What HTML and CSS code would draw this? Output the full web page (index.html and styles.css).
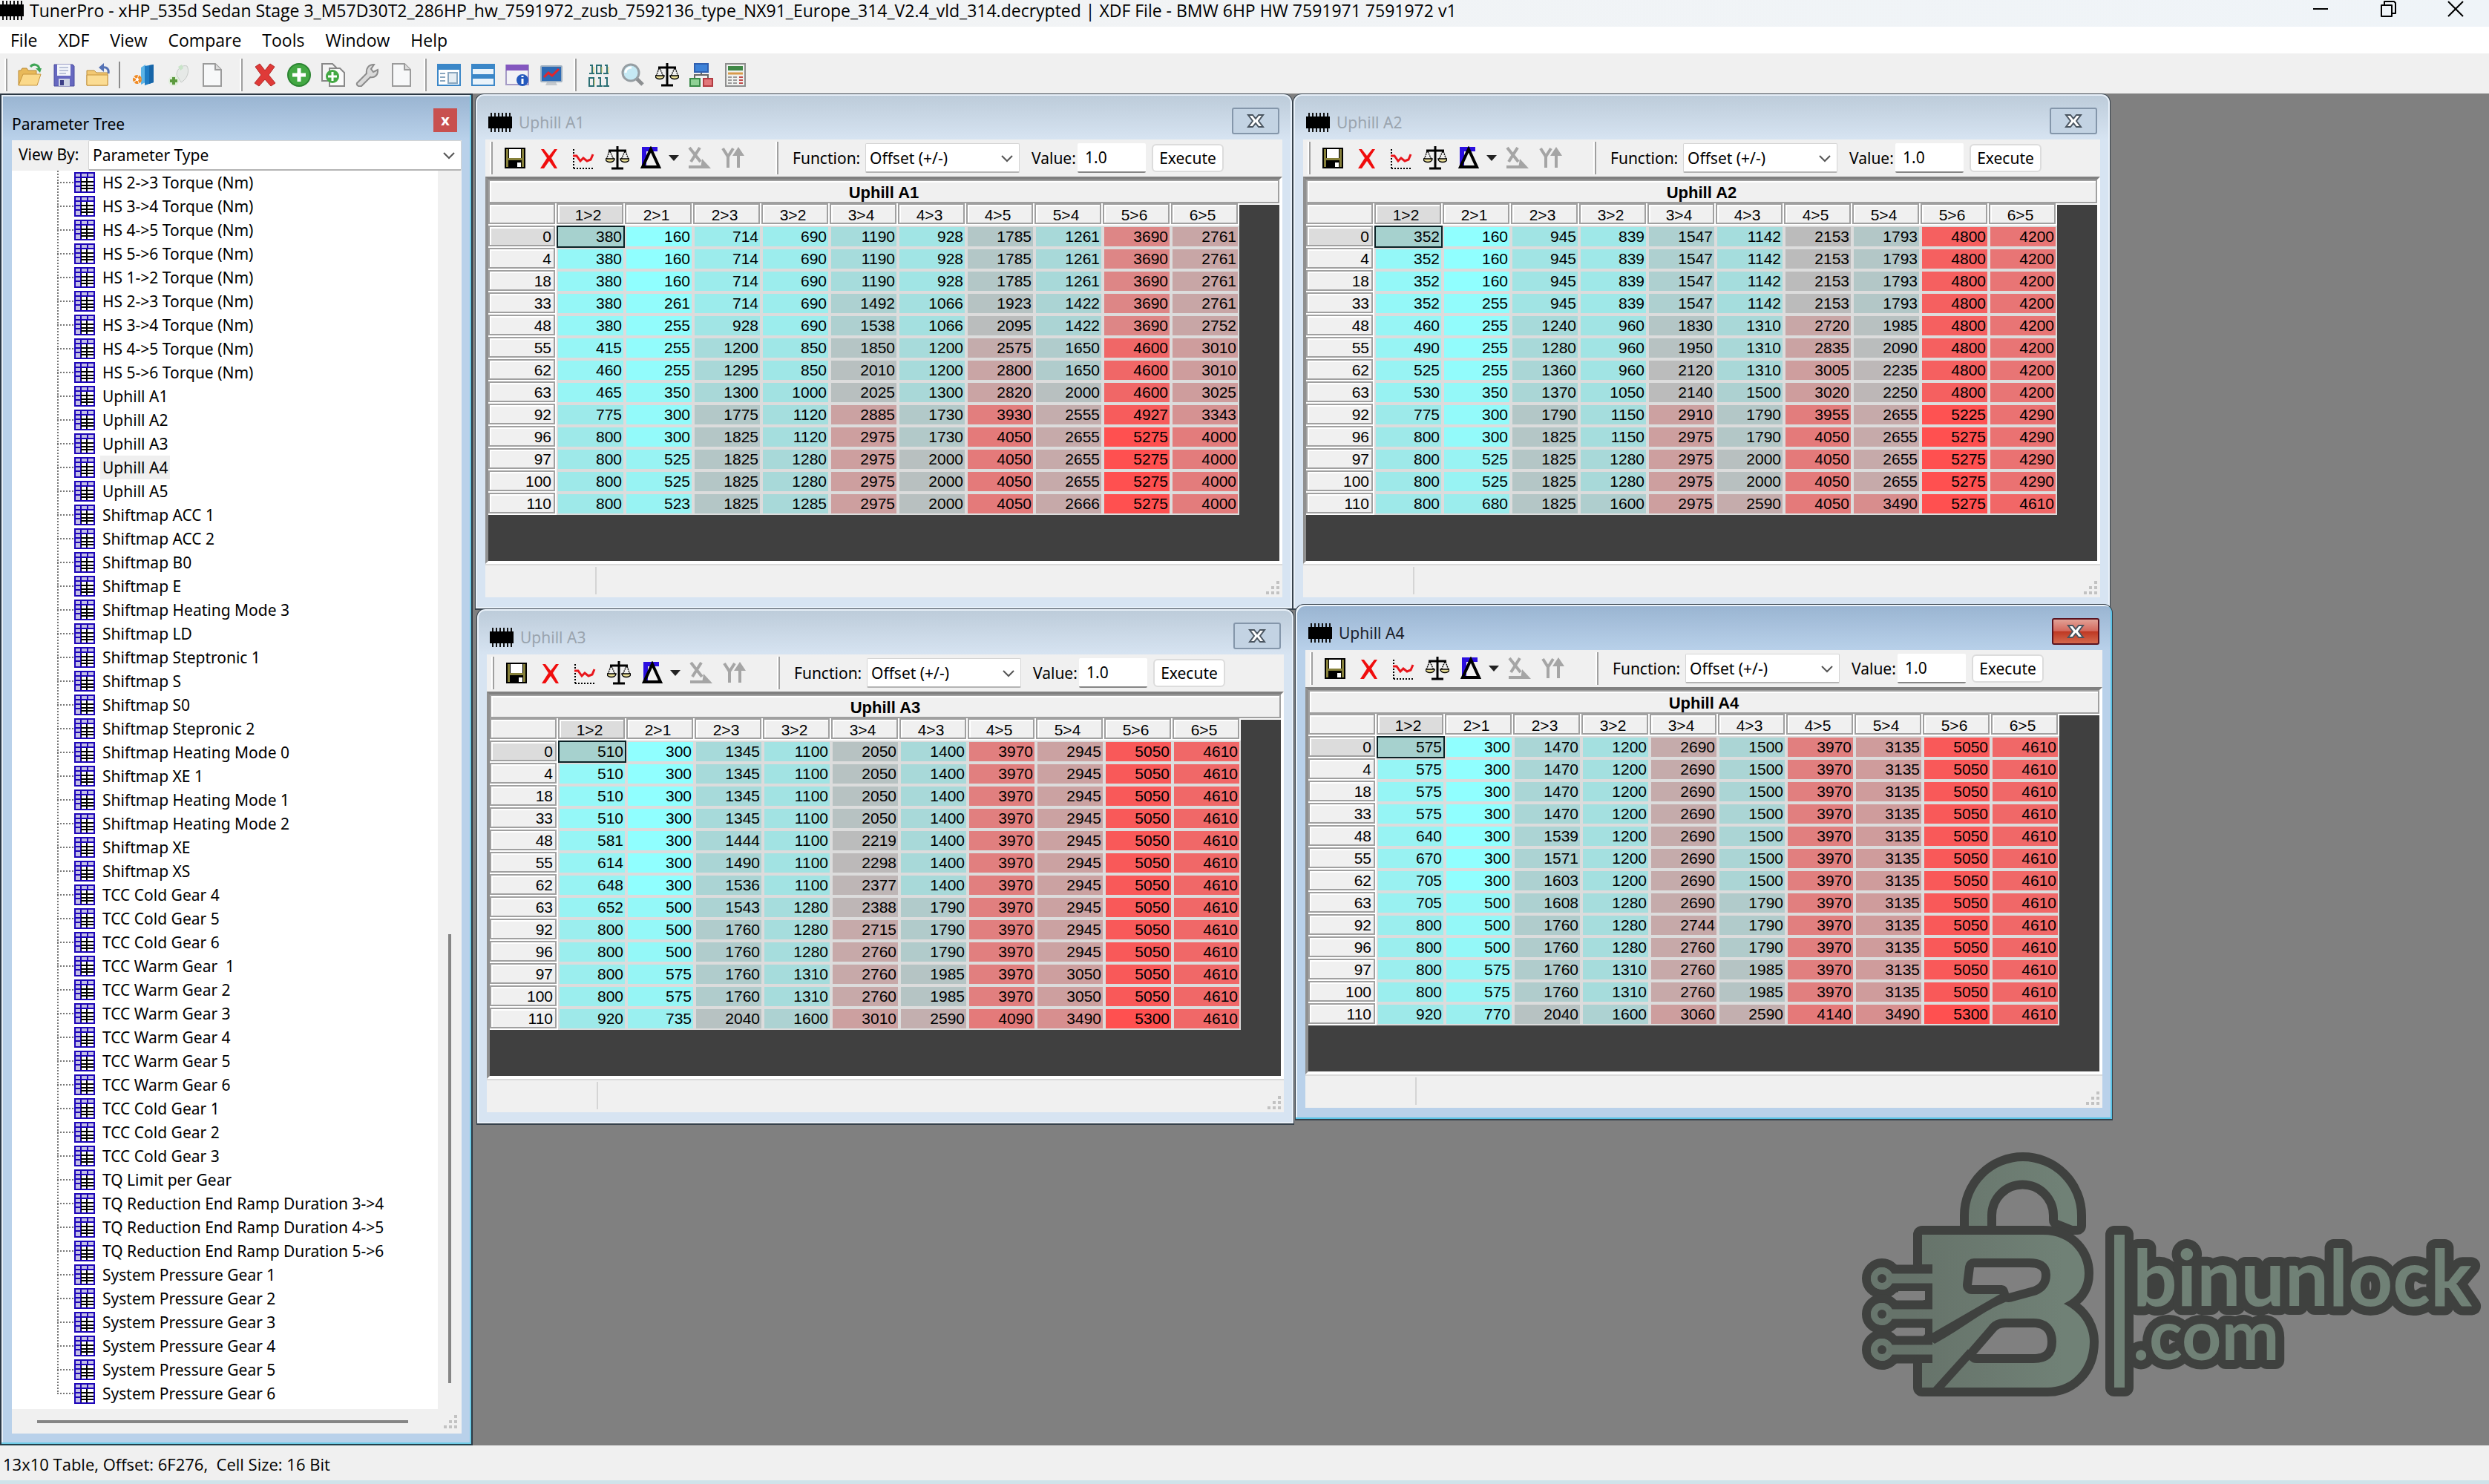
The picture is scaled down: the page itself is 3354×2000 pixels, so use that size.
FILE: index.html
```html
<!DOCTYPE html>
<html lang="en">
  <head>
    <meta charset="UTF-8" />
    <meta name="viewport" content="width=device-width, initial-scale=1.0" />
    <title>TunerPro</title>
    <link rel="stylesheet" href="styles.css">
  </head>
  <body>
    <!-- icon set -->
    <svg class="sprite" aria-hidden="true">
      <symbol id="chip" viewBox="0 0 32 26">
        <path d="M4 0v26M9 0v26M14 0v26M19 0v26M24 0v26M29 0v26" stroke="#111" stroke-width="2" />
        <rect y="5" width="32" height="16" fill="#000" />
      </symbol>
      <symbol id="open" viewBox="0 0 32 32">
        <path d="M1 30V10h3l2-3h6l2 3h11v6" fill="#e8b95a" stroke="#b98a34" />
        <path d="M1 30l6-15h24l-5 15z" fill="#fbd98a" stroke="#c7953d" />
        <path d="M17 5c4-5 11-3 12 3" fill="none" stroke="#3fa556" stroke-width="3" />
        <path d="M24 7h8l-2 6z" fill="#3fa556" />
      </symbol>
      <symbol id="save" viewBox="0 0 32 32">
        <path d="M3 2h25l2 2v27H3z" fill="#6668c0" stroke="#4b4d9d" />
        <rect x="7" y="2" width="18" height="15" fill="#f4f6fb" />
        <path d="M10 6h12M10 10h12M10 14h9" stroke="#a9b4cf" stroke-width="1.5" />
        <rect x="9" y="21" width="15" height="10" fill="#cdd3e4" />
        <rect x="11" y="23" width="5" height="7" fill="#3c3f86" />
      </symbol>
      <symbol id="folder-back" viewBox="0 0 32 32">
        <path d="M1 30V10h10l3 3h15v17z" fill="#f3c974" stroke="#bb8c37" />
        <path d="M1 30V16h28v14z" fill="#fbdc93" stroke="#c7953d" />
        <path d="M30 14c1-6-2-9-8-8" fill="none" stroke="#5572b5" stroke-width="3" />
        <path d="M17 6l7-6v12z" fill="#5572b5" />
      </symbol>
      <symbol id="door" viewBox="0 0 32 32">
        <path d="M12 6l6-4v24l-6 3z" fill="#5db4e6" />
        <path d="M17 4l12-2v24l-12 4z" fill="#1f7cc4" />
        <path d="M23 3l6-1v24l-6 2z" fill="#1765a8" />
        <circle cx="7" cy="22" r="4" fill="#fff" stroke="#f08a24" stroke-width="4" stroke-dasharray="4 1" />
      </symbol>
      <symbol id="plugin" viewBox="0 0 32 32">
        <path d="M14 16c0-9 8-14 14-12 4 7 0 18-8 22z" fill="#e6e9e7" stroke="#c6cac7" />
        <path d="M16 5l5-3 2 5-4 3z" fill="#c9e4c9" />
        <circle cx="10" cy="24" r="7" fill="#dfeeda" />
        <path d="M10 19v10M5 24h10" stroke="#5c9a3e" stroke-width="4" />
      </symbol>
      <symbol id="page" viewBox="0 0 32 32">
        <path d="M4 1h16l8 8v22H4z" fill="#f7f8f9" stroke="#9b9b9b" stroke-width="2" />
        <path d="M20 1v8h8" fill="#dcdcdc" stroke="#9b9b9b" stroke-width="2" />
      </symbol>
      <symbol id="delete" viewBox="0 0 32 32">
        <path d="M3 5l6-4 7 9 7-9 6 4-8 11 9 11-6 4-8-9-8 9-6-4 9-11z" fill="#df3a38" stroke="#b22a2a" />
      </symbol>
      <symbol id="add" viewBox="0 0 32 32">
        <circle cx="16" cy="16" r="15" fill="#43a843" stroke="#2b8331" stroke-width="2" />
        <path d="M16 7v18M7 16h18" stroke="#fff" stroke-width="5" />
      </symbol>
      <symbol id="copy-add" viewBox="0 0 32 32">
        <path d="M1 1h14l5 5v18H1z" fill="#f4f4f4" stroke="#888" stroke-width="2" />
        <path d="M11 7h14l6 6v18H11z" fill="#fafafa" stroke="#888" stroke-width="2" />
        <circle cx="15" cy="18" r="9" fill="#43a843" />
        <path d="M15 12v12M9 18h12" stroke="#fff" stroke-width="3" />
      </symbol>
      <symbol id="wrench" viewBox="0 0 32 32">
        <path d="M2 27l13-13c-1-6 2-12 10-12l-4 6 3 4 6-3c1 8-5 11-10 10L8 31c-4 1-7-1-6-4z" fill="#d9d9d9" stroke="#8b8b8b" stroke-width="2" />
      </symbol>
      <symbol id="win-list" viewBox="0 0 32 32">
        <rect x="1" y="2" width="30" height="28" fill="#fff" stroke="#3b87c8" stroke-width="2" />
        <rect x="1" y="2" width="30" height="7" fill="#3b87c8" />
        <path d="M4 14h7M4 19h7M4 24h7" stroke="#8aa7bf" stroke-width="2" />
        <rect x="15" y="13" width="12" height="14" fill="#e5edf3" stroke="#8aa7bf" stroke-width="2" />
      </symbol>
      <symbol id="win-rows" viewBox="0 0 32 32">
        <rect x="1" y="2" width="30" height="28" fill="#eaf3fa" stroke="#3b87c8" stroke-width="2" />
        <path d="M1 5h30M1 18h30" stroke="#3b87c8" stroke-width="6" />
      </symbol>
      <symbol id="win-info" viewBox="0 0 32 32">
        <rect x="1" y="3" width="30" height="26" fill="#f2f2f6" stroke="#a59bc6" stroke-width="2" />
        <rect x="1" y="2" width="30" height="8" fill="#8457bf" />
        <circle cx="23" cy="23" r="8" fill="#2459bd" />
        <path d="M23 21v7M23 17v2" stroke="#fff" stroke-width="3" />
      </symbol>
      <symbol id="monitor" viewBox="0 0 32 32">
        <path d="M11 24h10l3 6H8z" fill="#c5c9cd" />
        <rect x="2" y="4" width="28" height="21" rx="1" fill="#2d6ab4" stroke="#9eb0c2" stroke-width="2" />
        <path d="M6 19l6-6 5 4 9-9" fill="none" stroke="#e4252b" stroke-width="3" />
      </symbol>
      <symbol id="binary" viewBox="0 0 32 32">
        <path d="M4 3h3v11M3 14h7M24 3h3v11M22 14h7M13 3h6v11h-6zM3 20h6v11h-6zM15 20h3v11M13 31h8M24 20h3v11M22 31h8" fill="none" stroke="#2b6f74" stroke-width="2" />
        <path d="M9 5v8M20 5v8M10 22v8M29 5v8" stroke="#d9cf62" />
      </symbol>
      <symbol id="search" viewBox="0 0 32 32">
        <path d="M20 20l9 9" stroke="#8c8f91" stroke-width="5" />
        <circle cx="13" cy="13" r="11" fill="#c5e9f4" stroke="#969ea3" stroke-width="3" />
        <path d="M6 13c0-5 4-7 8-7" fill="none" stroke="#fff" stroke-width="3" />
      </symbol>
      <symbol id="scales" viewBox="0 0 32 32">
        <path d="M16 0v30M4 6h24M8 30h16" stroke="#000" stroke-width="3" />
        <path d="M5 7L1 18M6 7l5 11M27 7l4 11M26 7l-5 11" stroke="#000" stroke-width="1.5" stroke-dasharray="2 1" />
        <path d="M0 17h12c0 6-12 6-12 0zM20 17h12c0 6-12 6-12 0z" fill="#eadf96" stroke="#000" stroke-width="1.5" />
      </symbol>
      <symbol id="network" viewBox="0 0 32 32">
        <path d="M16 11v6M7 21v-5h18v5" fill="none" stroke="#666" stroke-width="2" />
        <rect x="7" y="1" width="18" height="11" fill="#3d82d8" stroke="#2f5fb0" stroke-width="2" />
        <rect x="1" y="21" width="13" height="10" fill="#8fd195" stroke="#3a8a48" stroke-width="2" />
        <rect x="19" y="21" width="12" height="10" fill="#e2777a" stroke="#b23b42" stroke-width="2" />
      </symbol>
      <symbol id="calc" viewBox="0 0 32 32">
        <rect x="3" y="1" width="26" height="30" fill="#f0f1ef" stroke="#8d8d8d" stroke-width="2" />
        <rect x="6" y="4" width="20" height="6" fill="#3f8746" />
        <path d="M6 14h20" stroke="#d89a4b" stroke-width="3" />
        <path d="M6 19h13M6 23h13M6 27h13" stroke="#9a9a9a" stroke-width="2" stroke-dasharray="5 2" />
        <path d="M21 19h5M21 23h5M21 27h5" stroke="#c04c4c" stroke-width="2" />
      </symbol>
      <symbol id="disk" viewBox="0 0 32 32">
        <path d="M2 2h28v28H2z" fill="#000" />
        <path d="M4 4h3v24H4zM25 4h3v24h-3zM7 16h18v3H7z" fill="#86803a" />
        <rect x="8" y="4" width="16" height="12" fill="#fff" />
        <path d="M19 22h5v6h-5z" fill="#fff" />
      </symbol>
      <symbol id="cross" viewBox="0 0 32 32">
        <path d="M5 4l4 0 7 9 7-9h4L19 16l8 14h-4l-7-10-7 10H4l9-14z" fill="#f00d0d" />
      </symbol>
      <symbol id="plot" viewBox="0 0 32 32">
        <path d="M3 4v26M3 30h28" stroke="#000" stroke-width="2" stroke-dasharray="2 2" />
        <path d="M2 13h5l5 7 4-4 5 4 5-2 3-7" fill="none" stroke="#e8151b" stroke-width="3" />
      </symbol>
      <symbol id="delta" viewBox="0 0 32 32">
        <path d="M3 1h21v6H9v20H3z" fill="#2b0fe0" />
        <path d="M9 27h14L15 7z" fill="#f0f0f0" />
        <path d="M15 4l11 24H4z" fill="none" stroke="#000" stroke-width="4" />
      </symbol>
      <symbol id="x-axis" viewBox="0 0 32 32">
        <path d="M3 2l15 19M17 2L5 21M2 28h22" fill="none" stroke="#a5a5a5" stroke-width="4" />
        <path d="M20 17l12 13H18z" fill="#a5a5a5" />
      </symbol>
      <symbol id="y-axis" viewBox="0 0 32 32">
        <path d="M2 3l7 11 7-11M9 14v15M23 29V8" fill="none" stroke="#a5a5a5" stroke-width="4" />
        <path d="M15 13l8-12 8 12z" fill="#a5a5a5" />
      </symbol>
      <symbol id="table" viewBox="0 0 28 28">
        <rect width="28" height="28" fill="#1c05b8" />
        <path d="M2 2h6v4H2zM10 2h7v4h-7zM19 2h7v4h-7zM2 8h6v4H2zM2 14h6v4H2zM2 20h6v6H2z" fill="#c3bfe6" />
        <path d="M9 8h17v18H9z" fill="#000" />
        <path d="M10 8h6v4h-6zM18 8h8v4h-8zM10 14h6v3h-6zM18 14h8v3h-8zM10 19h6v2h-6zM18 19h8v2h-8zM10 23h6v3h-6zM18 23h8v3h-8z" fill="#fff" />
      </symbol>
      <symbol id="close-x" viewBox="0 0 24 20">
        <path d="M2 2h6l4 5 4-5h6l-6 8 6 8h-6l-4-5-4 5H2l6-8z" fill="#fff" stroke="#4a5560" stroke-width="2" />
      </symbol>
      <symbol id="chevron" viewBox="0 0 16 10">
        <path d="M1 1l7 7 7-7" fill="none" stroke="#555" stroke-width="2" />
      </symbol>
      <symbol id="resize" viewBox="0 0 18 18">
        <path d="M14 0h4v4h-4zM14 7h4v4h-4zM14 14h4v4h-4zM7 7h4v4H7zM7 14h4v4H7zM0 14h4v4H0z" fill="#c2c2c2" />
      </symbol>
    </svg>

    <div class="app">
      <header class="titlebar">
        <svg class="chip"><use href="#chip" /></svg>
        <h1>TunerPro - xHP_535d Sedan Stage 3_M57D30T2_286HP_hw_7591972_zusb_7592136_type_NX91_Europe_314_V2.4_vld_314.decrypted | XDF File - BMW 6HP HW 7591971 7591972 v1</h1>
        <div class="sysButtons">
          <button aria-label="Minimize"><svg viewBox="0 0 24 24"><path d="M2 12h20" stroke="#000" stroke-width="2" /></svg></button>
          <button aria-label="Restore"><svg viewBox="0 0 24 24"><path d="M3 7h14v15H3zM7 6V2h13l2 2v14h-4" fill="none" stroke="#000" stroke-width="2" stroke-linejoin="round" /></svg></button>
          <button aria-label="Close"><svg viewBox="0 0 24 24"><path d="M2 2l20 20M22 2L2 22" stroke="#000" stroke-width="2" /></svg></button>
        </div>
      </header>

      <nav class="menu">
        <button>File</button>
        <button>XDF</button>
        <button>View</button>
        <button>Compare</button>
        <button>Tools</button>
        <button>Window</button>
        <button>Help</button>
      </nav>

      <div class="toolbar mainToolbar" id="mainToolbar"></div>

      <main class="workspace">
        <aside class="panel">
          <div class="panelTitle">
            <h2>Parameter Tree</h2>
            <button class="panelClose" aria-label="Close panel">x</button>
          </div>
          <div class="panelBody">
            <div class="viewBy">
              <label for="viewBy">View By:</label>
              <div class="combo">
                <select id="viewBy"><option>Parameter Type</option></select>
                <svg><use href="#chevron" /></svg>
              </div>
            </div>
            <div class="treeArea">
              <ul class="tree" id="tree"></ul>
              <div class="vscroll"><div class="thumb"></div></div>
            </div>
            <div class="hscroll">
              <div class="thumb"></div>
              <svg class="resize"><use href="#resize" /></svg>
            </div>
          </div>
        </aside>

        <section class="mdi" id="mdi">
          <svg class="logo" viewBox="0 0 874 400" role="img" aria-label="binunlock.com">
            <defs>
              <linearGradient id="green" gradientUnits="userSpaceOnUse" x1="100" y1="0" x2="300" y2="0">
                <stop offset="0" stop-color="#66736a" />
                <stop offset="1" stop-color="#708176" />
              </linearGradient>
            </defs>
            <g class="logoShape">
              <path d="M173 126V107A73 73 0 0 1 319 107V121H313L293 113V107A47 47 0 0 0 198 107V126Z" />
              <path d="M56 192H124M56 240H124M56 288H124" fill="none" stroke="#3f413f" stroke-width="37" />
              <circle cx="56" cy="192" r="15" />
              <circle cx="56" cy="240" r="15" />
              <circle cx="56" cy="288" r="15" />
              <path d="M110 133H273C310 133 329 160 329 185C329 205 318 218 301 226C325 238 336 258 336 277C336 315 310 339 279 339H110V305H124V173H110Z" />
              <rect x="369" y="133" width="14" height="206" />
            </g>
            <path d="M78 209h36v12H78zM78 259h36v10H78z" fill="#808080" />
            <path d="M100 180h24M100 204h24M100 228h24M100 252h24M100 276h24M100 301h24" stroke="#3f413f" stroke-width="10" />
            <g class="logoRing">
              <circle cx="56" cy="192" r="15" />
              <circle cx="56" cy="240" r="15" />
              <circle cx="56" cy="288" r="15" />
            </g>
            <path d="M64 192H132M64 240H132M64 288H145" stroke="url(#green)" stroke-width="13" />
            <path d="M217 212L125 265L112 268L127 280C160 262 190 238 215 227L240 216Z" fill="#3f413f" />
            <path d="M176 291L129 343" stroke="#3f413f" stroke-width="11" />
            <g class="logoHole">
              <path d="M180 177H254C266 177 271 180 271 187C271 196 267 200 260 203L227 212C225 203 222 201 215 201H177Z" />
              <path d="M222 258H260C275 258 279 267 279 277C279 288 275 294 260 294H183L209 264Q213 258 222 258Z" />
            </g>
            <circle class="logoDot" cx="56" cy="192" r="6" />
            <circle class="logoDot" cx="56" cy="240" r="6" />
            <circle class="logoDot" cx="56" cy="288" r="6" />
            <g class="logoText">
              <text x="394" y="229" font-size="105">binunlock</text>
              <text x="394" y="302" font-size="93">.com</text>
            </g>
            <rect x="369" y="133" width="14" height="206" fill="#708176" />
          </svg>
        </section>
      </main>

      <footer class="status">13x10 Table, Offset: 6F276,&nbsp; Cell Size: 16 Bit</footer>
    </div>
    <script src="script.js"></script>
  </body>
</html>
```
FILE: styles.css
```css
* {
  box-sizing: border-box;
}

body {
  margin: 0;
  background: #f0f0f0;
  color: #000;
  font-family: "Noto Sans", "Open Sans", sans-serif;
  font-size: 21px;
}

button,
input,
select {
  font: inherit;
  color: inherit;
}

button {
  padding: 0;
  border: 0;
  background: none;
}

h1,
h2 {
  margin: 0;
  font-size: inherit;
  font-weight: normal;
}

.sprite {
  position: absolute;
  width: 0;
  height: 0;
}

.app {
  display: flex;
  flex-direction: column;
  height: 100vh;
}

/* title bar and menu */
.titlebar {
  display: flex;
  align-items: center;
  gap: 8px;
  height: 36px;
  padding-bottom: 8px;
  background: linear-gradient(90deg, #f3f3f3, #eff4f8);
}

.titlebar h1 {
  flex: 1;
  font-family: "Open Sans", sans-serif;
  font-size: 23px;
  line-height: 28px;
  white-space: nowrap;
}

.chip {
  flex: none;
  width: 32px;
  height: 26px;
}

.sysButtons {
  display: flex;
}

.sysButtons button {
  width: 91px;
  height: 28px;
}

.sysButtons svg {
  width: 24px;
  height: 24px;
}

.menu {
  display: flex;
  gap: 28px;
  height: 36px;
  padding-left: 14px;
  background: #fff;
  font-family: "Open Sans", sans-serif;
  font-size: 23px;
}

/* toolbars */
.toolbar {
  display: flex;
  align-items: center;
  height: 54px;
  padding-left: 6px;
  background: #f0f0f0;
}

.mainToolbar {
  padding-top: 4px;
}

.tool {
  display: flex;
  align-items: center;
  justify-content: center;
  width: 46px;
  height: 46px;
}

.tool svg {
  width: 32px;
  height: 32px;
}

.grip {
  width: 4px;
  height: 44px;
  margin-right: 7px;
  border-left: 2px solid #fff;
  border-right: 2px solid #a0a0a0;
}

.tool + .grip {
  margin-left: 7px;
}

.gap {
  width: 14px;
}

.sep {
  width: 2px;
  height: 36px;
  margin: 0 9px 0 5px;
  background: #8c8c8c;
}

/* workspace */
.workspace {
  flex: 1;
  display: flex;
  min-height: 0;
  background: #808080;
}

.panel {
  display: flex;
  flex-direction: column;
  width: 637px;
  padding: 0 13px 14px 14px;
  border: 2px solid #2c3844;
  border-bottom-color: #22404a;
  background: linear-gradient(#99b4d1, #b9d1ea 60px);
  box-shadow: inset -2px -2px #6fcbe6, inset 2px 2px #e6eff8;
}

.panelTitle {
  display: flex;
  align-items: center;
  justify-content: space-between;
  height: 61px;
  padding: 16px 6px 0 0;
}

.panelClose {
  width: 32px;
  height: 32px;
  margin-bottom: 10px;
  background: #c8504f;
  color: #fff;
  font-size: 20px;
  font-weight: bold;
  line-height: 24px;
}

.panelBody {
  flex: 1;
  display: flex;
  flex-direction: column;
  min-height: 0;
  background: #f0f0f0;
}

.viewBy {
  display: flex;
  height: 41px;
}

.viewBy label {
  width: 103px;
  padding-left: 9px;
  line-height: 38px;
}

.combo {
  position: relative;
  flex: 1;
}

.combo select {
  appearance: none;
  width: 100%;
  height: 100%;
  padding: 0 0 0 5px;
  border: 1px solid #d4d4d4;
  border-bottom: 2px solid #b4b4b4;
  border-radius: 2px;
  background: #fff;
}

.combo svg {
  position: absolute;
  top: 16px;
  right: 9px;
  width: 16px;
  height: 10px;
}

.treeArea {
  flex: 1;
  display: flex;
  min-height: 0;
}

.tree {
  flex: 1;
  margin: 0;
  padding: 0 0 0 61px;
  background: #fff;
  list-style: none;
  overflow: hidden;
}

.tree li {
  display: flex;
  align-items: center;
  height: 32px;
  background:
    repeating-linear-gradient(#777 0 2px, transparent 2px 4px) 0 0 / 2px 100% no-repeat,
    repeating-linear-gradient(90deg, #777 0 2px, transparent 2px 4px) 0 15px / 22px 2px no-repeat;
}

.tree li:last-child {
  background-size: 2px 16px, 22px 2px;
}

.tree svg {
  width: 28px;
  height: 28px;
  margin-left: 23px;
}

.tree span {
  margin-left: 7px;
  padding: 0 3px;
  line-height: 32px;
  white-space: pre;
}

.tree .selected {
  background: #efefef;
}

.vscroll {
  display: flex;
  flex-direction: column;
  justify-content: flex-end;
  align-items: center;
  width: 32px;
  padding-bottom: 35px;
}

.vscroll .thumb {
  width: 4px;
  height: 37%;
  background: #858585;
}

.hscroll {
  display: flex;
  align-items: center;
  height: 33px;
  padding: 0 6px 0 34px;
}

.hscroll .thumb {
  flex: 1;
  height: 4px;
  margin-right: 48px;
  background: #858585;
}

.resize {
  width: 18px;
  height: 18px;
}

.mdi {
  position: relative;
  flex: 1;
}

/* table windows */
.window {
  position: absolute;
  width: 1102px;
  padding: 0 13px 15px;
  border: 1px solid #37424c;
  border-bottom-width: 2px;
  border-radius: 12px 12px 0 0;
  background: linear-gradient(#bccbd9, #d7e4f2 62px);
  box-shadow: inset 0 0 0 2px #e9f1f9;
}

.window.active {
  background: linear-gradient(#99b4d1, #b9d1ea 62px);
  box-shadow: inset -2px -2px #59c3e6, inset 2px 2px #eef5fb;
}

.windowTitle {
  display: flex;
  align-items: center;
  gap: 9px;
  height: 61px;
  padding: 14px 4px 0 4px;
}

.windowTitle h2 {
  flex: 1;
  color: #9aa4ae;
}

.active h2 {
  color: #1a222c;
}

.windowTitle button {
  display: flex;
  align-items: center;
  justify-content: center;
  width: 64px;
  height: 36px;
  margin-bottom: 4px;
  border: 2px solid #8496aa;
  border-radius: 3px;
  background: #c3d3e3;
}

.active .windowTitle button {
  border-color: #5a1420;
  background: linear-gradient(#e2a196, #d3685c 48%, #bd3722 50%, #d4694e);
}

.windowTitle button svg {
  width: 24px;
  height: 20px;
}

.windowBody {
  background: #f0f0f0;
}

.windowBody .toolbar {
  height: 50px;
}

.windowBody .grip {
  margin-right: 7px;
}

.windowBody .tool + .grip {
  margin: 0 19px 0 34px;
}

.arrow {
  width: 14px;
  height: 10px;
  margin: 0 4px 0 0;
}

.windowBody .combo {
  flex: none;
  width: 208px;
  height: 40px;
  margin: 0 16px 0 8px;
}

.field {
  width: 92px;
  height: 40px;
  margin: 0 8px 0 4px;
  padding: 0 10px;
  border: 0;
  border-bottom: 2px solid #868686;
  border-radius: 2px;
  background: #fff;
}

.functionLabel {
  width: 90px;
}

.valueLabel {
  width: 58px;
}

.execute {
  width: 97px;
  height: 38px;
  border: 2px solid #dcdcdc;
  border-radius: 6px;
  background: #fff;
}

.grid {
  height: 522px;
  border: 4px solid #fff;
  border-top: 4px solid #808080;
  border-left: 4px solid #909090;
  background: #404040;
  font-family: "Liberation Sans", Arial, sans-serif;
}

.caption {
  height: 32px;
  padding-top: 4px;
  border: 2px solid #a0a0a0;
  box-shadow: inset 2px 2px #fff, 0 2px #fff;
  background: #f0f0f0;
  font-weight: bold;
  font-size: 22px;
  line-height: 24px;
  text-align: center;
}

.grid table {
  width: 1012px;
  border-spacing: 0;
  table-layout: fixed;
}

.grid th,
.grid td {
  height: 30px;
  padding: 0;
  font-size: 21px;
  font-weight: normal;
  line-height: 24px;
  text-align: right;
}

.grid th {
  padding: 2px 5px 0 0;
  border: 0 solid #fff;
  border-width: 0 2px 2px 0;
  background: #f0f0f0;
  box-shadow: inset 0 0 0 2px #a0a0a0, inset 4px 4px #fff;
}

.grid thead th {
  padding-top: 4px;
  line-height: 22px;
  text-align: center;
}

.grid th.current {
  background: #dcdcdc;
}

.grid td {
  padding-right: 2px;
  border: 2px solid #dcdcdc;
}

.grid td.current {
  border-color: #0c2226;
}

.windowStatus {
  display: flex;
  align-items: flex-end;
  justify-content: space-between;
  height: 45px;
  padding: 2px 4px 4px 148px;
  border-top: 2px solid #dadada;
}

.windowStatus::before {
  content: "";
  align-self: stretch;
  width: 2px;
  background: #d5d5d5;
}

.logo {
  position: absolute;
  right: 0;
  bottom: 17px;
  width: 874px;
  height: 400px;
}

.logoShape,
.logoText {
  fill: url(#green);
  stroke: #3f413f;
  stroke-width: 24px;
  stroke-linejoin: round;
  paint-order: stroke;
}

.logoText {
  fill: #708176;
  font-family: Lato, sans-serif;
  font-weight: bold;
}

.logoRing {
  fill: #68766d;
}

.logoHole {
  fill: #808080;
  stroke: #3f413f;
  stroke-width: 24px;
  stroke-linejoin: round;
  paint-order: stroke;
}

.logoDot {
  fill: #3f413f;
}

.status {
  height: 52px;
  padding-left: 4px;
  border-bottom: 5px solid #cfe3ea;
  background: #f0f0f0;
  font-family: "Open Sans", sans-serif;
  font-size: 22px;
  line-height: 50px;
}
```
FILE: script.js
```js
const mainTools = [
  "grip", "open", "save", "folder-back", "sep", "door", "plugin", "page", "gap",
  "grip", "delete", "add", "copy-add", "wrench", "page",
  "grip", "win-list", "win-rows", "win-info", "monitor",
  "grip", "binary", "search", "scales", "network", "calc",
];

const params = [
  "HS 2->3 Torque (Nm)", "HS 3->4 Torque (Nm)", "HS 4->5 Torque (Nm)", "HS 5->6 Torque (Nm)",
  "HS 1->2 Torque (Nm)", "HS 2->3 Torque (Nm)", "HS 3->4 Torque (Nm)", "HS 4->5 Torque (Nm)",
  "HS 5->6 Torque (Nm)", "Uphill A1", "Uphill A2", "Uphill A3", "Uphill A4", "Uphill A5",
  "Shiftmap ACC 1", "Shiftmap ACC 2", "Shiftmap B0", "Shiftmap E", "Shiftmap Heating Mode 3",
  "Shiftmap LD", "Shiftmap Steptronic 1", "Shiftmap S", "Shiftmap S0", "Shiftmap Stepronic 2",
  "Shiftmap Heating Mode 0", "Shiftmap XE 1", "Shiftmap Heating Mode 1", "Shiftmap Heating Mode 2",
  "Shiftmap XE", "Shiftmap XS", "TCC Cold Gear 4", "TCC Cold Gear 5", "TCC Cold Gear 6",
  "TCC Warm Gear  1", "TCC Warm Gear 2", "TCC Warm Gear 3", "TCC Warm Gear 4", "TCC Warm Gear 5",
  "TCC Warm Gear 6", "TCC Cold Gear 1", "TCC Cold Gear 2", "TCC Cold Gear 3", "TQ Limit per Gear",
  "TQ Reduction End Ramp Duration 3->4", "TQ Reduction End Ramp Duration 4->5",
  "TQ Reduction End Ramp Duration 5->6", "System Pressure Gear 1", "System Pressure Gear 2",
  "System Pressure Gear 3", "System Pressure Gear 4", "System Pressure Gear 5", "System Pressure Gear 6",
];

const columns = ["1>2", "2>1", "2>3", "3>2", "3>4", "4>3", "4>5", "5>4", "5>6", "6>5"];
const speeds = [0, 4, 18, 33, 48, 55, 62, 63, 92, 96, 97, 100, 110];

const windows = [
  {
    title: "Uphill A1", x: 3, y: 0,
    rows: [
      [380, 160, 714, 690, 1190, 928, 1785, 1261, 3690, 2761],
      [380, 160, 714, 690, 1190, 928, 1785, 1261, 3690, 2761],
      [380, 160, 714, 690, 1190, 928, 1785, 1261, 3690, 2761],
      [380, 261, 714, 690, 1492, 1066, 1923, 1422, 3690, 2761],
      [380, 255, 928, 690, 1538, 1066, 2095, 1422, 3690, 2752],
      [415, 255, 1200, 850, 1850, 1200, 2575, 1650, 4600, 3010],
      [460, 255, 1295, 850, 2010, 1200, 2800, 1650, 4600, 3010],
      [465, 350, 1300, 1000, 2025, 1300, 2820, 2000, 4600, 3025],
      [775, 300, 1775, 1120, 2885, 1730, 3930, 2555, 4927, 3343],
      [800, 300, 1825, 1120, 2975, 1730, 4050, 2655, 5275, 4000],
      [800, 525, 1825, 1280, 2975, 2000, 4050, 2655, 5275, 4000],
      [800, 525, 1825, 1280, 2975, 2000, 4050, 2655, 5275, 4000],
      [800, 523, 1825, 1285, 2975, 2000, 4050, 2666, 5275, 4000],
    ],
  },
  {
    title: "Uphill A2", x: 1105, y: 0,
    rows: [
      [352, 160, 945, 839, 1547, 1142, 2153, 1793, 4800, 4200],
      [352, 160, 945, 839, 1547, 1142, 2153, 1793, 4800, 4200],
      [352, 160, 945, 839, 1547, 1142, 2153, 1793, 4800, 4200],
      [352, 255, 945, 839, 1547, 1142, 2153, 1793, 4800, 4200],
      [460, 255, 1240, 960, 1830, 1310, 2720, 1985, 4800, 4200],
      [490, 255, 1280, 960, 1950, 1310, 2835, 2090, 4800, 4200],
      [525, 255, 1360, 960, 2120, 1310, 3005, 2235, 4800, 4200],
      [530, 350, 1370, 1050, 2140, 1500, 3020, 2250, 4800, 4200],
      [775, 300, 1790, 1150, 2910, 1790, 3955, 2655, 5225, 4290],
      [800, 300, 1825, 1150, 2975, 1790, 4050, 2655, 5275, 4290],
      [800, 525, 1825, 1280, 2975, 2000, 4050, 2655, 5275, 4290],
      [800, 525, 1825, 1280, 2975, 2000, 4050, 2655, 5275, 4290],
      [800, 680, 1825, 1600, 2975, 2590, 4050, 3490, 5275, 4610],
    ],
  },
  {
    title: "Uphill A3", x: 5, y: 694,
    rows: [
      [510, 300, 1345, 1100, 2050, 1400, 3970, 2945, 5050, 4610],
      [510, 300, 1345, 1100, 2050, 1400, 3970, 2945, 5050, 4610],
      [510, 300, 1345, 1100, 2050, 1400, 3970, 2945, 5050, 4610],
      [510, 300, 1345, 1100, 2050, 1400, 3970, 2945, 5050, 4610],
      [581, 300, 1444, 1100, 2219, 1400, 3970, 2945, 5050, 4610],
      [614, 300, 1490, 1100, 2298, 1400, 3970, 2945, 5050, 4610],
      [648, 300, 1536, 1100, 2377, 1400, 3970, 2945, 5050, 4610],
      [652, 500, 1543, 1280, 2388, 1790, 3970, 2945, 5050, 4610],
      [800, 500, 1760, 1280, 2715, 1790, 3970, 2945, 5050, 4610],
      [800, 500, 1760, 1280, 2760, 1790, 3970, 2945, 5050, 4610],
      [800, 575, 1760, 1310, 2760, 1985, 3970, 3050, 5050, 4610],
      [800, 575, 1760, 1310, 2760, 1985, 3970, 3050, 5050, 4610],
      [920, 735, 2040, 1600, 3010, 2590, 4090, 3490, 5300, 4610],
    ],
  },
  {
    title: "Uphill A4", x: 1108, y: 688, active: true,
    rows: [
      [575, 300, 1470, 1200, 2690, 1500, 3970, 3135, 5050, 4610],
      [575, 300, 1470, 1200, 2690, 1500, 3970, 3135, 5050, 4610],
      [575, 300, 1470, 1200, 2690, 1500, 3970, 3135, 5050, 4610],
      [575, 300, 1470, 1200, 2690, 1500, 3970, 3135, 5050, 4610],
      [640, 300, 1539, 1200, 2690, 1500, 3970, 3135, 5050, 4610],
      [670, 300, 1571, 1200, 2690, 1500, 3970, 3135, 5050, 4610],
      [705, 300, 1603, 1200, 2690, 1500, 3970, 3135, 5050, 4610],
      [705, 500, 1608, 1280, 2690, 1790, 3970, 3135, 5050, 4610],
      [800, 500, 1760, 1280, 2744, 1790, 3970, 3135, 5050, 4610],
      [800, 500, 1760, 1280, 2760, 1790, 3970, 3135, 5050, 4610],
      [800, 575, 1760, 1310, 2760, 1985, 3970, 3135, 5050, 4610],
      [800, 575, 1760, 1310, 2760, 1985, 3970, 3135, 5050, 4610],
      [920, 770, 2040, 1600, 3060, 2590, 4140, 3490, 5300, 4610],
    ],
  },
];

function tool(name) {
  if (["grip", "sep", "gap"].includes(name)) return `<div class="${name}"></div>`;
  return `<button class="tool" aria-label="${name}"><svg><use href="#${name}" /></svg></button>`;
}

// cyan at the lowest value, red at the highest
function heat(value, min, max) {
  const t = (value - min) / (max - min);
  const mix = (a, b) => Math.round(a + (b - a) * t);
  return `rgb(${mix(144, 255)}, ${mix(255, 80)}, ${mix(255, 80)})`;
}

function buildTable(rows) {
  const all = rows.flat();
  const min = Math.min(...all);
  const max = Math.max(...all);
  const head = columns.map((c, i) => `<th class="${i === 0 ? "current" : ""}">${c}</th>`).join("");
  const body = rows.map((row, r) => {
    const cells = row.map((v, c) => {
      const current = r === 0 && c === 0;
      const color = current ? "#a6d1ce" : heat(v, min, max);
      return `<td class="${current ? "current" : ""}" style="background: ${color}">${v}</td>`;
    }).join("");
    return `<tr><th class="${r === 0 ? "current" : ""}">${speeds[r]}</th>${cells}</tr>`;
  }).join("");
  return `<table><thead><tr><th></th>${head}</tr></thead><tbody>${body}</tbody></table>`;
}

function buildWindow(win, i) {
  return `
    <article class="window ${win.active ? "active" : ""}" style="left: ${win.x}px; top: ${win.y}px">
      <div class="windowTitle">
        <svg class="chip"><use href="#chip" /></svg>
        <h2>${win.title}</h2>
        <button aria-label="Close"><svg><use href="#close-x" /></svg></button>
      </div>
      <div class="windowBody">
        <div class="toolbar">
          ${["grip", "disk", "cross", "plot", "scales", "delta"].map(tool).join("")}
          <svg class="arrow" viewBox="0 0 14 10"><path d="M0 1h14L7 9z" fill="#222" /></svg>
          ${["x-axis", "y-axis", "grip"].map(tool).join("")}
          <label class="functionLabel" for="fn${i}">Function:</label>
          <div class="combo">
            <select id="fn${i}"><option>Offset (+/-)</option></select>
            <svg><use href="#chevron" /></svg>
          </div>
          <label class="valueLabel" for="val${i}">Value:</label>
          <input class="field" id="val${i}" type="text" value="1.0" />
          <button class="execute">Execute</button>
        </div>
        <div class="grid">
          <div class="caption">${win.title}</div>
          ${buildTable(win.rows)}
        </div>
        <div class="windowStatus"><svg class="resize"><use href="#resize" /></svg></div>
      </div>
    </article>`;
}

document.querySelector("#mainToolbar").innerHTML = mainTools.map(tool).join("");

document.querySelector("#tree").innerHTML = params.map((name) => {
  const selected = name === "Uphill A4" ? "selected" : "";
  return `<li><svg><use href="#table" /></svg><span class="${selected}">${name.replace(/>/g, "&gt;")}</span></li>`;
}).join("");

document.querySelector("#mdi").insertAdjacentHTML("beforeend", windows.map(buildWindow).join(""));
```
